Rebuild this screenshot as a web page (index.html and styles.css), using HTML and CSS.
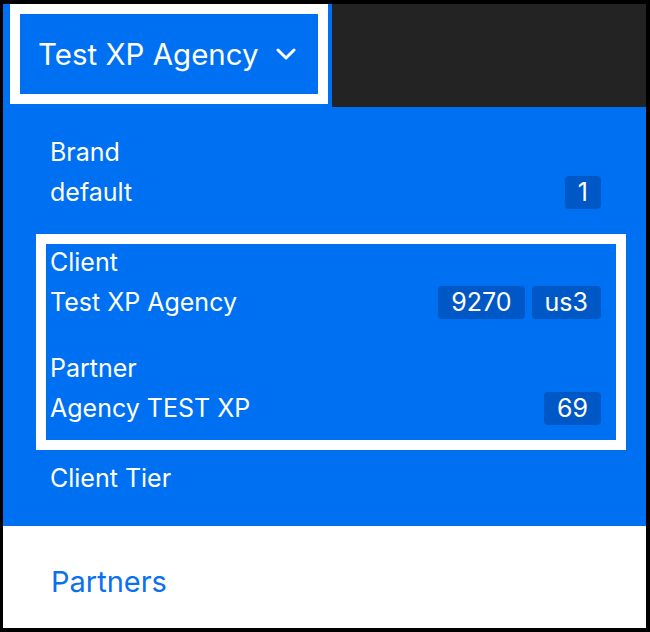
FILE: index.html
```html
<!DOCTYPE html>
<html lang="en">
<head>
    <meta charset="UTF-8">
    <meta name="viewport" content="width=device-width, initial-scale=1.0">
    <title>Account Switcher</title>
    <link rel="stylesheet" href="styles.css">
</head>
<body>
    <div class="frame">
        <header class="topbar">
            <div class="switcher">
                <div class="switcher-label">
                    <span>Test XP Agency</span>
                    <svg class="chevron" width="20" height="12" viewBox="0 0 20 12" aria-hidden="true">
                        <path d="M2 2 L10 10 L18 2" fill="none" stroke="#fff" stroke-width="3" stroke-linecap="round" stroke-linejoin="round"/>
                    </svg>
                </div>
            </div>
        </header>

        <div class="account-panel">
            <div class="section section-brand">
                <div class="label">Brand</div>
                <div class="value">
                    <span>default</span>
                    <span class="badges"><span class="badge">1</span></span>
                </div>
            </div>

            <div class="focus-group">
                <div class="section">
                    <div class="label">Client</div>
                    <div class="value">
                        <span>Test XP Agency</span>
                        <span class="badges">
                            <span class="badge">9270</span>
                            <span class="badge">us3</span>
                        </span>
                    </div>
                </div>
                <div class="section section-partner">
                    <div class="label">Partner</div>
                    <div class="value">
                        <span>Agency TEST XP</span>
                        <span class="badges"><span class="badge">69</span></span>
                    </div>
                </div>
            </div>

            <div class="section section-tier">
                <div class="label">Client Tier</div>
            </div>
        </div>

        <nav class="menu">
            <a class="menu-link" href="#">Partners</a>
        </nav>
    </div>
</body>
</html>
```

FILE: styles.css
```css
body {
    margin: 0;
    padding: 4px 4px 4px 3px;
    background-color: #000;
    font-family: Inter, Lato, Arial, sans-serif;
    color: #fff;
}
.frame {
    height: 624px;
    background-color: #fff;
    display: flex;
    flex-direction: column;
}
.topbar {
    height: 103px;
    background-color: #232323;
    display: flex;
}
.switcher {
    width: 318px;
    background-color: #0070f2;
    padding: 0 4px 3px 7px;
}
.switcher-label {
    height: 80px;
    border: 10px solid #fff;
    display: flex;
    align-items: center;
    gap: 17px;
    padding: 0 0 0 18px;
    font-size: 29.5px;
}
.chevron {
    display: block;
}
.account-panel {
    background-color: #0070f2;
    padding: 27px 45px 30px 47px;
    font-size: 25px;
}
.label {
    height: 36px;
    line-height: 36px;
}
.value {
    height: 44px;
    display: flex;
    align-items: center;
    justify-content: space-between;
}
.badges {
    display: flex;
    gap: 7px;
}
.badge {
    height: 33px;
    line-height: 33px;
    padding: 0 13px;
    border-radius: 4px;
    background-color: #0058c6;
}
.section-brand {
    margin-bottom: 20px;
}
.focus-group {
    margin: 0 -25px 10px -14px;
    padding: 0 15px 10px 4px;
    border: 10px solid #fff;
}
.section-partner {
    margin-top: 26px;
}
.menu {
    padding: 38px 0 0 48px;
}
.menu-link {
    color: #0a6ff0;
    font-size: 29px;
    text-decoration: none;
}
```
